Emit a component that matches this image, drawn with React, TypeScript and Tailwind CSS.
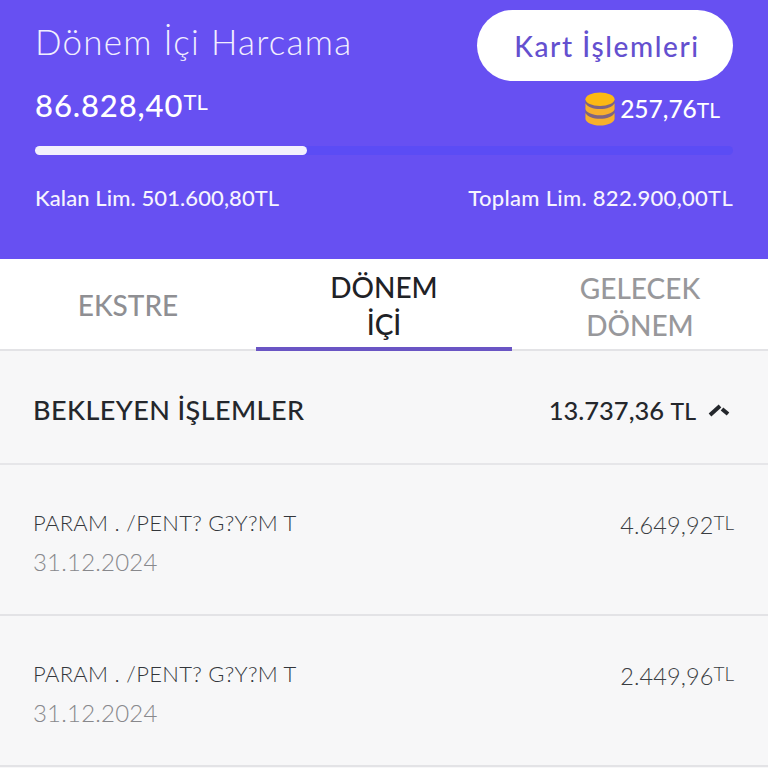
export default function App() {
  const rows = [
    { name: "PARAM . /PENT? G?Y?M T", date: "31.12.2024", amount: "4.649,92" },
    { name: "PARAM . /PENT? G?Y?M T", date: "31.12.2024", amount: "2.449,96" },
  ];
  return (
    <div className="h-[768px] w-[768px] overflow-hidden bg-[#f7f7f8] font-['Lato',sans-serif]">
      <header className="flex h-[259px] flex-col bg-[#6750f2] px-[35px] text-white">
        <div className="flex items-start justify-between pt-[10px]">
          <div className="pt-[10px] text-[35px] leading-[42px] font-light tracking-[1.25px] text-[#f1eefe]">Dönem İçi Harcama</div>
          <button className="flex h-[71px] w-[256px] items-center justify-center rounded-full bg-white pl-[4px] text-[28px] font-medium tracking-[1.6px] text-[#6450cf]">Kart İşlemleri</button>
        </div>
        <div className="mt-[2px] flex items-center justify-between">
          <div className="flex items-start text-[31px] leading-[40px] font-medium tracking-[0.9px]">
            86.828,40<span className="mt-[5px] text-[22px] leading-[24px] font-normal tracking-normal">TL</span>
          </div>
          <div className="mr-[13px] flex items-center gap-[4px] pt-[9px]">
            <svg width="32" height="34" viewBox="0 0 32 35" aria-hidden="true">
              <path d="M1 8h30v20H1z" fill="#7d6484" />
              <ellipse cx="16" cy="7.500" rx="15" ry="7" fill="#fdb913" />
              <path d="M1 11.500c2 4 8 6 15 6s13-2 15-6v6c0 3-7 6.500-15 6.500S1 20.500 1 17.500z" fill="#f6b02d" />
              <path d="M1 21.500c2 4 8 6 15 6s13-2 15-6v6c0 3.500-7 7-15 7s-15-3.500-15-7z" fill="#f6b02d" />
            </svg>
            <div className="flex items-baseline text-[24.500px] leading-[32px] font-medium">
              257,76<span className="text-[21px] font-normal">TL</span>
            </div>
          </div>
        </div>
        <div className="mt-[20px] h-[9px] w-full rounded-full bg-[#5b4cf5]">
          <div className="h-full w-[272px] rounded-full bg-[#f3f1fd]" />
        </div>
        <div className="mt-[30px] flex items-center justify-between text-[22px] leading-[26px] font-medium text-[#f6f4fe]">
          <div className="tracking-[0.1px]">Kalan Lim. 501.600,80<span className="font-normal">TL</span></div>
          <div className="tracking-[0.3px]">Toplam Lim. 822.900,00<span className="font-normal">TL</span></div>
        </div>
      </header>
      <nav className="grid h-[92px] grid-cols-3 border-b-2 border-[#e3e3e6] bg-white pt-[2px] text-center text-[28px] leading-[37px] font-medium">
        <div className="flex items-center justify-center text-[#8f8f93]">EKSTRE</div>
        <div className="-mb-[2px] flex items-center justify-center border-b-4 border-[#6a55c4] text-[#1f2226]"><span className="mt-[3px] w-[120px]">DÖNEM İÇİ</span></div>
        <div className="flex items-center justify-center text-[#98989b]"><span className="mt-[3px] w-[130px]">GELECEK DÖNEM</span></div>
      </nav>
      <section className="flex h-[114px] items-center justify-between border-b-2 border-[#e6e6e9] pt-[6px] pr-[38px] pl-[33px] text-[#24272c]">
        <div className="text-[27px] font-medium tracking-[0.42px]">BEKLEYEN İŞLEMLER</div>
        <div className="flex items-center gap-[12px]">
          <div className="text-[25.500px] font-medium">13.737,36 <span className="text-[23px]">TL</span></div>
          <svg width="22" height="14" viewBox="0 0 22 14" aria-hidden="true">
            <path d="M2 12 12 3" stroke="#24272c" strokeWidth="4" fill="none" />
            <path d="M14 6 20 11" stroke="#24272c" strokeWidth="4" fill="none" />
          </svg>
        </div>
      </section>
      {rows.map((r, i) => (
        <div key={i} className="flex h-[151px] items-start justify-between border-b-2 border-[#e3e3e6] pt-[42px] pr-[34px] pl-[33px]">
          <div>
            <div className="text-[22px] leading-[32px] font-light tracking-[0.3px] text-[#33363b]">{r.name}</div>
            <div className="mt-[7px] text-[24px] leading-[32px] font-light tracking-[0.2px] text-[#88888c]">{r.date}</div>
          </div>
          <div className="flex items-start text-[#3a3d42]">
            <span className="text-[23.500px] leading-[36px] font-light tracking-[0.1px]">{r.amount}</span>
            <span className="mt-[5px] text-[19px] leading-[22px] font-light">TL</span>
          </div>
        </div>
      ))}
    </div>
  );
}
